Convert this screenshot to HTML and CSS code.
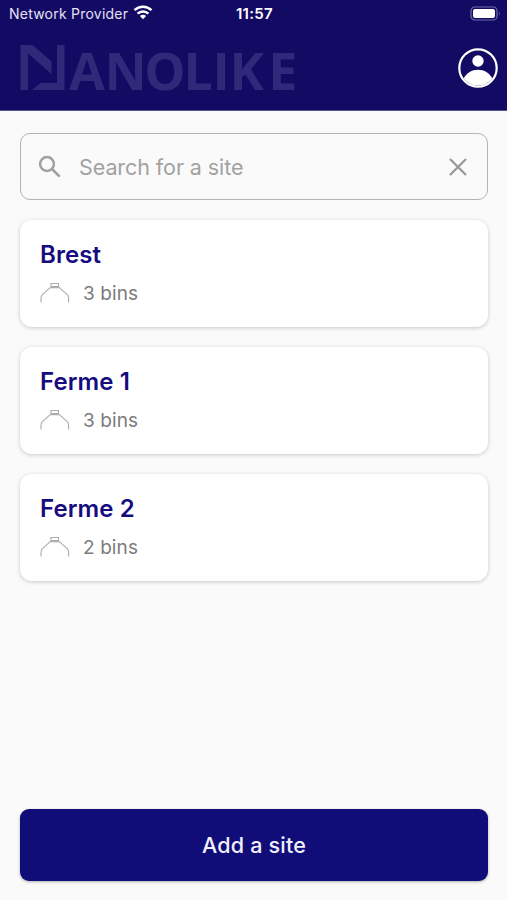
FILE: index.html
```
<!DOCTYPE html>
<html lang="en">
<head>
<meta charset="utf-8">
<title>Nanolike</title>
<link rel="stylesheet" href="styles.css">
</head>
<body>
<svg class="defs" width="0" height="0" aria-hidden="true">
  <symbol id="bin" viewBox="0 0 30 22">
    <path d="M11 1.500h7.500v3H11zM9.800 5.600h10M10.300 5.600L2.600 12.400Q1 13.800 1 16.200v4.300M19.300 5.600L27 12.400Q28.600 13.800 28.600 16.200v4.300" fill="none" stroke="#adadad" stroke-width="1.100"/>
  </symbol>
</svg>
<header class="header">
  <div class="status">
    <div class="status-left">
      <span class="carrier">Network Provider</span>
      <svg class="wifi" width="20" height="15" viewBox="0 0 20 15">
        <g fill="none" stroke="#fff" stroke-width="2.5">
          <path d="M1.500 5.200a12.200 12.200 0 0 1 17 0"/>
          <path d="M4.600 8.600a7.700 7.700 0 0 1 10.800 0"/>
        </g>
        <path d="M10 14.200L6.900 11.100a4.500 4.500 0 0 1 6.200 0z" fill="#fff"/>
      </svg>
    </div>
    <span class="time">11:57</span>
    <svg class="battery" width="31" height="15" viewBox="0 0 31 15">
      <rect x="1" y="1" width="26" height="13" rx="3.800" fill="none" stroke="#706cab" stroke-width="1.200"/>
      <rect x="3" y="3" width="22" height="9" rx="2" fill="#fff"/>
      <path d="M28.800 5.200q1.800 2.300 0 4.600z" fill="#706cab"/>
    </svg>
  </div>
  <div class="brand">
    <svg class="logo" width="290" height="66" viewBox="20 35 290 66">
      <path d="M20.500 45H32.500L51.500 61.500V74L28 53.500V90H20.500zM57 45H64.500V90H32L40.500 83H57z"/>
      <text y="90" x="69 104.500 144.200 183.600 212.400 229.400 268.300">ANOLIKE</text>
    </svg>
    <svg class="avatar" width="40" height="40" viewBox="0 0 40 40">
      <circle cx="20" cy="20" r="18.700" fill="none" stroke="#fff" stroke-width="2.200"/>
      <circle cx="20" cy="13" r="5.700" fill="#fff"/>
      <path d="M5.500 30.500C9 25 13.500 21.700 20 21.700S31 25 34.500 30.500A18.500 18.500 0 0 1 5.500 30.500z" fill="#fff"/>
    </svg>
  </div>
</header>
<main class="content">
  <div class="search">
    <svg width="24" height="24" viewBox="0 0 24 24" fill="none" stroke="#a0a0a0" stroke-width="2.500">
      <circle cx="9" cy="9" r="6.900"/><path d="M14 14l7.700 7.700"/>
    </svg>
    <span class="placeholder">Search for a site</span>
    <svg width="18" height="18" viewBox="0 0 18 18" fill="none" stroke="#979797" stroke-width="2.200">
      <path d="M1 1l16 16M17 1L1 17"/>
    </svg>
  </div>
  <section class="card">
    <h2 class="name">Brest</h2>
    <div class="meta"><svg class="bin"><use href="#bin"/></svg><span>3 bins</span></div>
  </section>
  <section class="card">
    <h2 class="name">Ferme 1</h2>
    <div class="meta"><svg class="bin"><use href="#bin"/></svg><span>3 bins</span></div>
  </section>
  <section class="card">
    <h2 class="name">Ferme 2</h2>
    <div class="meta"><svg class="bin"><use href="#bin"/></svg><span>2 bins</span></div>
  </section>
  <button class="add">Add a site</button>
</main>
</body>
</html>
```
FILE: styles.css
```
* { box-sizing: border-box; }
body {
  margin: 0;
  height: 900px;
  display: flex;
  flex-direction: column;
  background: #fafafa;
  font-family: Inter, "Liberation Sans", sans-serif;
}
.defs { display: none; }
.header {
  height: 111px;
  flex: none;
  background: #130b63;
  border-bottom: 1px solid #55518d;
  color: #fff;
}
.status {
  display: grid;
  grid-template-columns: 1fr auto 1fr;
  align-items: center;
  height: 27px;
  padding: 0 6px 0 9px;
}
.status-left { display: flex; align-items: center; gap: 5px; }
.carrier { font-size: 14px; letter-spacing: 0.230px; color: #e4e1f5; white-space: nowrap; }
.wifi { flex: none; margin-top: -2px; }
.time { font-size: 15px; font-weight: 600; letter-spacing: 0.300px; margin-right: 1px; }
.battery { justify-self: end; }
.brand {
  display: flex;
  justify-content: space-between;
  align-items: center;
  height: 82px;
  padding: 0 9px 0 20px;
}
.logo { fill: #302979; overflow: visible; }
.logo text { font: 700 52px "Open Sans", sans-serif; }
.content {
  flex: 1;
  display: flex;
  flex-direction: column;
  padding: 22px 19px 19px 20px;
}
.search {
  height: 67px;
  display: flex;
  align-items: center;
  padding: 0 20px 0 17px;
  border: 1px solid #b4b4b4;
  border-radius: 10px;
}
.placeholder { flex: 1; margin-left: 17px; font-size: 21.500px; letter-spacing: -0.080px; color: #a2a2a2; }
.card {
  height: 107px;
  margin-top: 20px;
  padding: 17px 20px;
  background: #fff;
  border-radius: 12px;
  box-shadow: 0 1px 4px rgba(0, 0, 0, 0.200);
}
.name { margin: 0; font-size: 24px; font-weight: 600; line-height: 35px; letter-spacing: 0.100px; color: #160c80; }
.meta { display: flex; align-items: center; height: 42px; gap: 13px; font-size: 19px; letter-spacing: 0.100px; color: #7b7b7b; }
.bin { width: 30px; height: 22px; }
.add {
  height: 72px;
  margin-top: auto;
  border: 0;
  border-radius: 9px;
  background: #100d78;
  color: #f0effc;
  font: 500 21.500px Inter, sans-serif;
  letter-spacing: 0.200px;
  box-shadow: 0 1px 3px rgba(0, 0, 0, 0.300);
}
```
